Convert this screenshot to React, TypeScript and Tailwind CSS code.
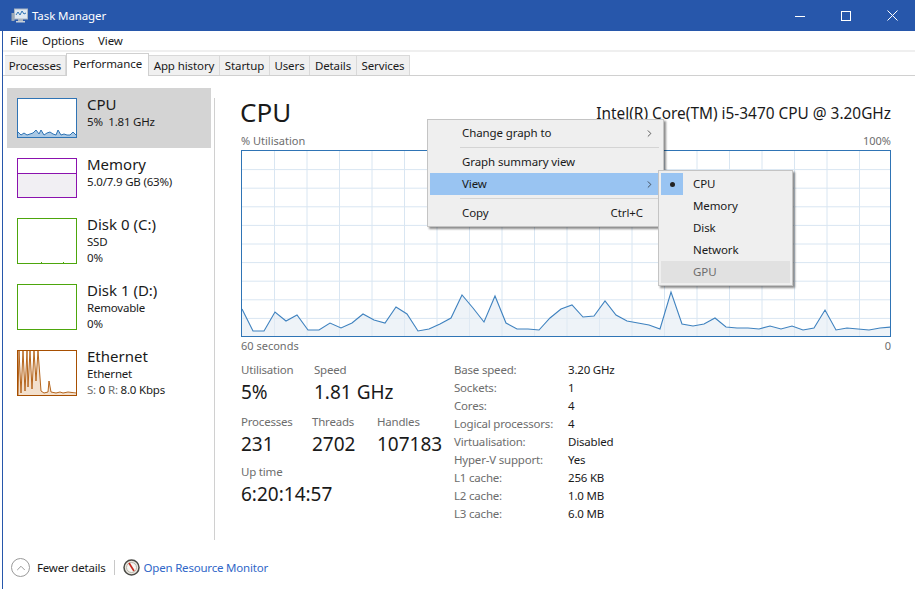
import React from 'react';
import { ChevronRight, ChevronUp } from 'lucide-react';

const font = "font-['Noto_Sans',sans-serif]";

// y positions of the CPU history, 60 samples, 11px apart
const cpuSamples = [
  29, 51, 51, 32, 41, 35, 50, 50, 43, 48, 43, 34, 40, 43, 27, 34, 51, 49, 44, 38, 15, 28, 42, 16, 43, 49, 49, 50, 38, 29, 25,
  37, 36, 21, 35, 41, 43, 45, 49, 12, 44, 46, 44, 38, 47, 48, 48, 49, 46, 49, 46, 50, 48, 30, 50, 48, 49, 50, 48, 47,
];

const CpuGraph = () => {
  const base = 56;
  const line = cpuSamples.map((y, i) => `${i * 11},${y}`).join(' ');
  return (
    <div className="relative mt-[1px] h-[187px] w-[650px] border border-[#2f74b5] bg-white">
      <svg width="648" height="185" className="block">
        {Array.from({ length: 19 }).map((_, i) => (
          <line key={i} x1={32.5 * (i + 1)} x2={32.5 * (i + 1)} y1="0" y2="185" stroke="#d9e6f2" />
        ))}
        {Array.from({ length: 9 }).map((_, i) => (
          <line key={i} y1={18.6 * (i + 1)} y2={18.6 * (i + 1)} x1="0" x2="648" stroke="#d9e6f2" />
        ))}
        <g transform="translate(0,129)">
          <polygon points={`0,${base} ${line} 649,${base}`} fill="#e3ebf3" fillOpacity="0.6" />
          <polyline points={line} fill="none" stroke="#3f82bf" strokeWidth="1.1" />
        </g>
      </svg>
    </div>
  );
};

const Thumb = ({ border, h, children }: { border: string; h: string; children?: React.ReactNode }) => (
  <div className={`${h} w-[60px] shrink-0 border ${border} bg-white overflow-hidden`}>{children}</div>
);

const DiskTicks = () => (
  <svg width="58" height="44" className="block">
    <rect x="23" y="43" width="1" height="1" fill="#4da60c" />
    <rect x="45" y="43" width="1" height="1" fill="#4da60c" />
  </svg>
);

const SideItem = ({
  title,
  lines,
  thumb,
  active,
  h,
}: {
  title: string;
  lines: React.ReactNode[];
  thumb: React.ReactNode;
  active?: boolean;
  h: string;
}) => (
  <div className={`${h} flex gap-[10px] pl-[10px] pt-[10px] ${active ? 'bg-[#d4d4d4]' : ''}`}>
    {thumb}
    <div className="-mt-[4px]">
      <div className="text-[15px] leading-[20px] text-[#1a1a1a]">{title}</div>
      {lines.map((l, i) => (
        <div key={i} className="text-[11.5px] leading-[16px] tracking-[-0.2px] text-[#1a1a1a]">
          {l}
        </div>
      ))}
    </div>
  </div>
);

const Stat = ({ label, value, w }: { label: string; value: string; w: string }) => (
  <div className={w}>
    <div className="text-[11.5px] leading-[16px] tracking-[-0.2px] text-[#6d6d6d]">{label}</div>
    <div className="text-[19px] leading-[28px] text-[#1a1a1a]">{value}</div>
  </div>
);

const details = [
  ['Base speed:', '3.20 GHz'],
  ['Sockets:', '1'],
  ['Cores:', '4'],
  ['Logical processors:', '4'],
  ['Virtualisation:', 'Disabled'],
  ['Hyper-V support:', 'Yes'],
  ['L1 cache:', '256 KB'],
  ['L2 cache:', '1.0 MB'],
  ['L3 cache:', '6.0 MB'],
];

const tabs = ['Processes', 'Performance', 'App history', 'Startup', 'Users', 'Details', 'Services'];
const tabWidths = ['w-[61px]', 'w-[83px]', 'w-[71px]', 'w-[50px]', 'w-[40px]', 'w-[47px]', 'w-[53px]'];

export default function App() {
  return (
    <div className={`${font} relative flex h-[589px] w-[915px] flex-col overflow-hidden bg-white`}>
      {/* Title bar */}
      <div className="flex h-[31px] shrink-0 items-center bg-[#2757ab] pl-[11px] text-white">
        <svg width="17" height="15" viewBox="0 0 17 15" className="mr-[4px]">
          <rect x="0.5" y="5" width="3" height="8" fill="#9aa7b5" />
          <rect x="3.5" y="1" width="13" height="10" fill="#dfe8f2" stroke="#aab6c4" />
          <polyline points="5,7 7,4 9,7 11,3 13,6 15,5" fill="none" stroke="#2f74b5" />
          <rect x="7" y="11" width="5" height="2" fill="#a9b4c0" />
          <rect x="5" y="13" width="9" height="1.5" fill="#c8d0d9" />
        </svg>
        <span className="pt-[1px] text-[11.5px] tracking-[-0.1px]">Task Manager</span>
        <div className="ml-auto flex items-center">
          <div className="flex w-[46px] justify-center">
            <svg width="10" height="10">
              <line x1="0" x2="10" y1="5.5" y2="5.5" stroke="white" />
            </svg>
          </div>
          <div className="flex w-[46px] justify-center">
            <svg width="10" height="10">
              <rect x="0.5" y="0.5" width="9" height="9" fill="none" stroke="white" />
            </svg>
          </div>
          <div className="flex w-[46px] justify-center">
            <svg width="11" height="11">
              <path d="M0.5 0.5L10.5 10.5M10.5 0.5L0.5 10.5" fill="none" stroke="white" />
            </svg>
          </div>
        </div>
      </div>

      {/* Menu bar */}
      <div className="flex h-[19px] shrink-0 items-center gap-[14px] pl-[10px] text-[11.5px] tracking-[-0.1px] text-[#1a1a1a]">
        <span>File</span>
        <span>Options</span>
        <span>View</span>
      </div>
      <div className="h-[2px] shrink-0 bg-[#efefef]" />

      {/* Tabs */}
      <div className="flex h-[24px] shrink-0 items-end border-b border-[#d0d0d0] pl-[5px]">
        {tabs.map((t, i) =>
          t === 'Performance' ? (
            <div
              key={t}
              className={`${tabWidths[i]} -mb-px flex h-[23px] items-start justify-center border border-b-0 border-[#d0d0d0] bg-white pt-[1px] text-[11.5px] tracking-[-0.1px] text-[#1a1a1a]`}
            >
              {t}
            </div>
          ) : (
            <div
              key={t}
              className={`${tabWidths[i]} flex h-[20px] items-center justify-center border-r border-t border-[#d9d9d9] bg-[#f0f0f0] text-[11.5px] tracking-[-0.1px] text-[#1a1a1a]`}
            >
              {t}
            </div>
          ),
        )}
      </div>

      {/* Body */}
      <div className="flex flex-1 pl-[7px]">
        {/* Sidebar */}
        <div className="mt-[12px] w-[204px] shrink-0">
          <SideItem
            active
            h="h-[60px]"
            title="CPU"
            lines={['5%\u00a0 1.81 GHz']}
            thumb={
              <Thumb border="border-[#2f74b5]" h="h-[40px]">
                <svg width="58" height="38" className="block">
                  <polygon
                    points="0,38 0,33 3,36 6,34 9,36 12,35 15,34 18,31 21,35 23,31 26,36 29,34 32,33 35,35 38,36 40,31 43,36 46,35 49,36 52,36 55,33 58,36 58,38"
                    fill="#a9c8e4"
                  />
                  <polyline
                    points="0,33 3,36 6,34 9,36 12,35 15,34 18,31 21,35 23,31 26,36 29,34 32,33 35,35 38,36 40,31 43,36 46,35 49,36 52,36 55,33 58,36"
                    fill="none"
                    stroke="#2f74b5"
                  />
                </svg>
              </Thumb>
            }
          />
          <SideItem
            h="h-[60px]"
            title="Memory"
            lines={['5.0/7.9 GB (63%)']}
            thumb={
              <Thumb border="border-[#8b12ae]" h="h-[40px]">
                <div className="mt-[14px] h-[24px] border-t border-[#8b12ae] bg-[#f1eff3]" />
              </Thumb>
            }
          />
          <SideItem
            h="h-[66px]"
            title="Disk 0 (C:)"
            lines={['SSD', '0%']}
            thumb={
              <Thumb border="border-[#4da60c]" h="h-[46px]">
                <DiskTicks />
              </Thumb>
            }
          />
          <SideItem h="h-[66px]" title="Disk 1 (D:)" lines={['Removable', '0%']} thumb={<Thumb border="border-[#4da60c]" h="h-[46px]" />} />
          <SideItem
            h="h-[66px]"
            title="Ethernet"
            lines={[
              'Ethernet',
              <span key="net">
                <span className="text-[#6d6d6d]">S:</span> 0 <span className="text-[#6d6d6d]">R:</span> 8.0 Kbps
              </span>,
            ]}
            thumb={
              <Thumb border="border-[#a74f01]" h="h-[46px]">
                <svg width="58" height="44" className="block">
                  <polygon
                    points="0,44 1,0 3,42 5,0 7,40 9,0 10,36 12,0 14,38 16,0 18,30 20,0 23,40 26,42 30,41 31,30 33,41 38,42 42,41 45,42 50,41 58,43 58,44"
                    fill="#f3e0cd"
                  />
                  <polyline
                    points="0,44 1,0 3,42 5,0 7,40 9,0 10,36 12,0 14,38 16,0 18,30 20,0 23,40 26,42 30,41 31,30 33,41 38,42 42,41 45,42 50,41 58,42"
                    fill="none"
                    stroke="#b5651d"
                  />
                </svg>
              </Thumb>
            }
          />
        </div>
        <div className="ml-[3px] mt-[22px] h-[442px] w-px shrink-0 bg-[#d0d0d0]" />

        {/* Main panel */}
        <div className="ml-[26px] w-[650px]">
          <div className="mt-[18px] flex h-[36px] items-center justify-between">
            <span className="-ml-[1px] text-[26px] leading-[36px] text-[#1a1a1a]">CPU</span>
            <span className="mt-[4px] text-[15.4px] text-[#1a1a1a]">Intel(R) Core(TM) i5-3470 CPU @ 3.20GHz</span>
          </div>
          <div className="mt-[3px] flex h-[16px] items-center justify-between text-[11px] text-[#6d6d6d]">
            <span>% Utilisation</span>
            <span>100%</span>
          </div>
          <CpuGraph />
          <div className="mt-[1px] flex h-[16px] items-center justify-between text-[11px] text-[#6d6d6d]">
            <span>60 seconds</span>
            <span>0</span>
          </div>

          <div className="mt-[8px] flex">
            <div className="w-[213px]">
              <div className="flex">
                <Stat w="w-[73px]" label="Utilisation" value="5%" />
                <Stat w="w-[100px]" label="Speed" value="1.81 GHz" />
              </div>
              <div className="mt-[8px] flex">
                <Stat w="w-[71px]" label="Processes" value="231" />
                <Stat w="w-[65px]" label="Threads" value="2702" />
                <Stat w="w-[70px]" label="Handles" value="107183" />
              </div>
              <div className="mt-[6px]">
                <Stat w="w-[120px]" label="Up time" value="6:20:14:57" />
              </div>
            </div>
            <div className="-mt-[1px]">
              {details.map(([k, v]) => (
                <div key={k} className="flex h-[18px] items-center text-[11.5px] tracking-[-0.2px]">
                  <span className="w-[114px] text-[#6d6d6d]">{k}</span>
                  <span className="text-[#1a1a1a]">{v}</span>
                </div>
              ))}
            </div>
          </div>
        </div>
      </div>

      {/* Footer */}
      <div className="flex h-[44px] shrink-0 items-center pl-[11px] pt-[1px] text-[11.5px] tracking-[-0.2px]">
        <div className="flex h-[19px] w-[19px] items-center justify-center rounded-full border border-[#9a9a9a]">
          <ChevronUp size={14} strokeWidth={1.5} className="text-[#8a8a8a]" />
        </div>
        <span className="ml-[7px] text-[#1a1a1a]">Fewer details</span>
        <div className="ml-[8px] h-[15px] w-px bg-[#c8c8c8]" />
        <svg width="17" height="17" viewBox="0 0 17 17" className="ml-[8px]">
          <circle cx="8.5" cy="8.5" r="7.5" fill="#e9e6df" stroke="#4b4b46" strokeWidth="1.5" />
          <circle cx="8.5" cy="8.5" r="5" fill="#f7f6f2" stroke="#b9b5aa" />
          <line x1="6" y1="4" x2="11" y2="12" stroke="#c5281c" strokeWidth="1.6" />
        </svg>
        <span className="ml-[4px] text-[#3067c8]">Open Resource Monitor</span>
      </div>

      {/* Left window edge */}
      <div className="absolute bottom-0 left-0 top-[31px] w-[3px] border-r border-[#2757ab] bg-white" />

      {/* Context menu */}
      <div className="absolute left-[427px] top-[119px] w-[237px] border border-[#c4c4c4] bg-[#efefef] p-[2px] text-[11.5px] tracking-[-0.1px] text-[#1a1a1a] shadow-[2px_2px_2px_rgba(0,0,0,0.45)]">
        <div className="flex h-[22px] items-center pl-[32px] pr-[6px]">
          <span>Change graph to</span>
          <ChevronRight size={11} strokeWidth={1.5} className="ml-auto" />
        </div>
        <div className="my-[3px] ml-[30px] mr-[2px] h-px bg-[#d4d4d4]" />
        <div className="flex h-[22px] items-center pl-[32px] pr-[9px]">Graph summary view</div>
        <div className="flex h-[22px] items-center bg-[#99c4f2] pl-[32px] pr-[6px]">
          <span>View</span>
          <ChevronRight size={11} strokeWidth={1.5} className="ml-auto" />
        </div>
        <div className="my-[3px] ml-[30px] mr-[2px] h-px bg-[#d4d4d4]" />
        <div className="flex h-[22px] items-center pl-[32px] pr-[18px]">
          <span>Copy</span>
          <span className="ml-auto">Ctrl+C</span>
        </div>
      </div>

      {/* Sub menu */}
      <div className="absolute left-[658px] top-[170px] w-[135px] border border-[#c4c4c4] bg-[#efefef] p-[2px] text-[11.5px] tracking-[-0.1px] text-[#1a1a1a] shadow-[2px_2px_2px_rgba(0,0,0,0.45)]">
        {['CPU', 'Memory', 'Disk', 'Network', 'GPU'].map((item, i) => (
          <div key={item} className={`flex h-[22px] items-center ${i === 4 ? 'bg-[#e1e1e1] text-[#6d6d6d]' : ''}`}>
            <div className={`mr-[10px] flex h-[22px] w-[22px] items-center justify-center ${i === 0 ? 'bg-[#99c4f2]' : ''}`}>
              {i === 0 && <div className="h-[5px] w-[5px] rounded-full bg-[#222]" />}
            </div>
            {item}
          </div>
        ))}
      </div>
    </div>
  );
}
